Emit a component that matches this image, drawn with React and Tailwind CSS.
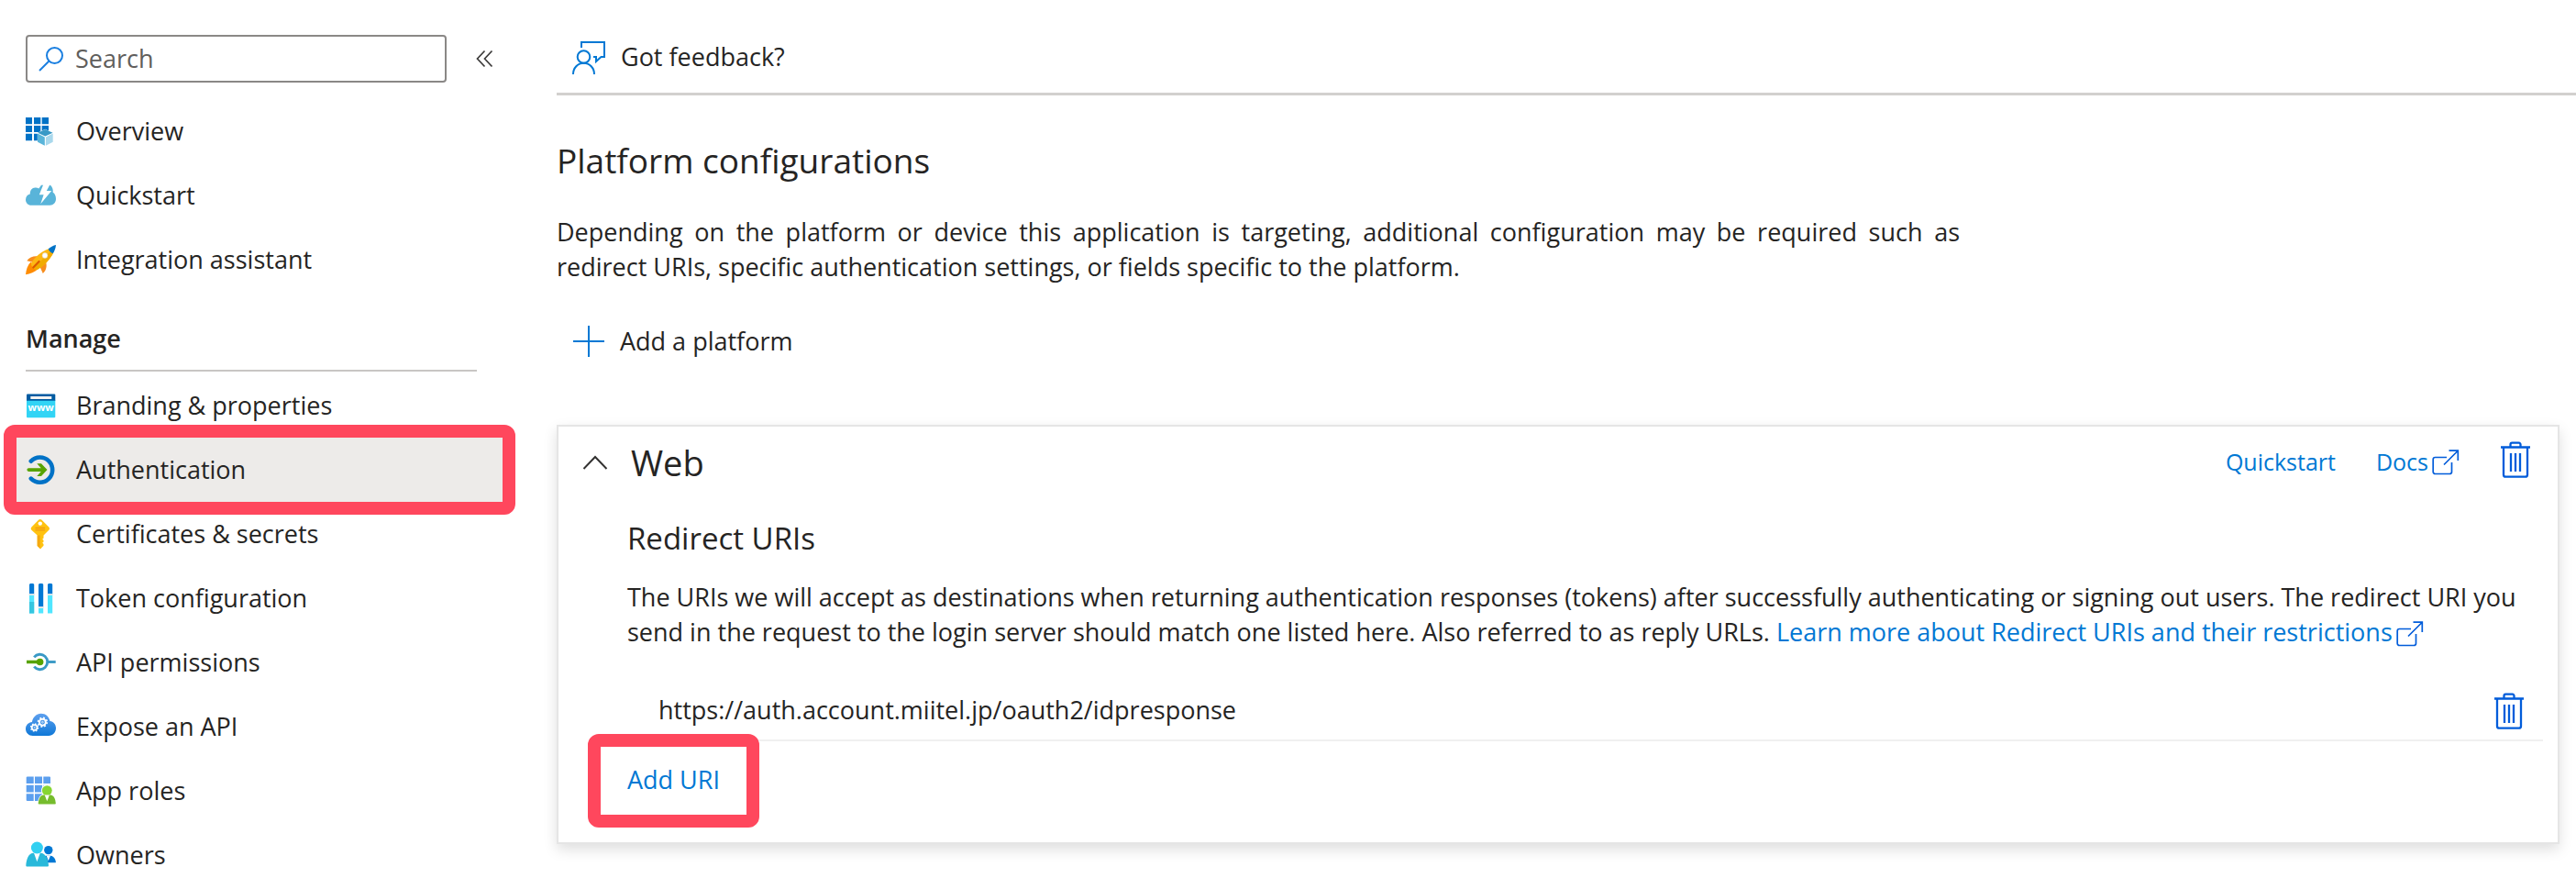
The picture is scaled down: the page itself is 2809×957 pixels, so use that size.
import React from "react";

/* ---------- Sidebar icons ---------- */

const OverviewIcon = () => (
  <svg viewBox="0 0 33 33" className="size-[33px]" aria-hidden="true">
    <g fill="#0072c6">
      <path d="M0 1h7v7.3H0zM9 1h7.3v7.3H9zM17.7 1H25v7.3h-7.3z" />
      <path d="M0 10h7v7H0zM9 10h7.3v7H9zM17.7 10H25v7h-7.3z" />
      <path d="M0 18.7h7v7.6H0zM9 18.7h7.3v7.6H9z" />
    </g>
    <path d="M21.3 13.7l8.5 4v10.2l-8.5 4-8.5-4V17.7z" fill="#fff" />
    <path d="M21.3 14l8.2 3.7-8.2 3.9-8.2-3.9z" fill="#3999c6" />
    <path d="M13 18.6l7.8 3.8v9.3L13 27.7z" fill="#59b4d9" />
    <path d="M29.7 18.6l-7.8 3.8v9.3l7.8-4z" fill="#a9d8ec" />
  </svg>
);

const QuickstartIcon = () => (
  <svg viewBox="0 0 33 33" className="size-[33px]" aria-hidden="true">
    <path
      d="M6 26.7C2.500 26.700 0 24 0 20.700c0-3.200 2-5.500 4.800-6.100C4.600 10.500 7 7.700 10.300 7.500c1.700-.1 3 .3 4 1L17 4.800h9.800c2.200 1.900 3.300 4.700 2.900 7.900 2 1.100 3.300 3.800 3.300 7 0 4-2.800 7-6.500 7z"
      fill="#59b4d9"
    />
    <path d="M19.500 3.500h7.300l-4 7.500h5.400L16.300 25.200l3.300-10h-4.800z" fill="#fff" />
  </svg>
);

const RocketIcon = () => (
  <svg viewBox="0 0 33 33" className="size-[33px]" aria-hidden="true">
    <path d="M13.500 12.500c-4.500-.8-9.500 1-12.200 4.800l6.400 1.500zM22 18.500c1.600 4.500.3 9.500-3.200 12.500l-3-6.500z" fill="#f78d1e" />
    <path d="M5.500 18.500C2 22 .5 27 0 32.300c4.800-.6 9.700-2.500 13.500-6z" fill="#ff8c00" />
    <path d="M25 4.300C17 7.500 9.500 13 5.800 20.500c.5 3.500 3 5.800 6.700 6.500C20 23 26.500 15.500 30 9z" fill="#fdb813" />
    <path d="M30 9c-3.500 6.500-10 14-17.500 18-1.500-.3-2.800-.9-3.900-1.800L27.500 6.500z" fill="#f0ab00" />
    <path d="M33 0c-2.700.6-5.500 2.100-8.300 4.200.6 2.300 2.600 4.200 5.200 5.100C31.600 6.300 32.700 3.200 33 0z" fill="#0072c6" />
    <circle cx="21" cy="11.5" r="2.9" fill="#fff" stroke="#d8d0c0" strokeWidth=".5" />
    <path d="M8.300 24.500l6.300-6.500" stroke="#dd5900" strokeWidth="2.2" strokeLinecap="round" />
  </svg>
);

const BrandingIcon = () => (
  <svg viewBox="0 0 33 33" className="size-[33px]" aria-hidden="true">
    <path d="M1 10h31.300v18.300c0 .5-.4.900-.9.900H1.900c-.5 0-.9-.4-.9-.9z" fill="#32d4f5" />
    <path d="M1.900 3.500h29.500c.5 0 .9.400.9.900v6.300H1V4.400c0-.5.400-.9.900-.9z" fill="#005ba1" />
    <path d="M5.300 6h23v3h-23z" fill="#f2f2f2" />
    <text x="16.6" y="22" textAnchor="middle" fontSize="11" fontWeight="700" fontFamily="Open Sans, sans-serif" fill="#fff">
      www
    </text>
  </svg>
);

const AuthIcon = () => (
  <svg viewBox="0 0 33 33" className="size-[33px]" aria-hidden="true">
    <path d="M5.800 6.700a13.600 13.600 0 1 1 0 18.900" fill="none" stroke="#0072c6" strokeWidth="4.6" strokeLinecap="round" />
    <path d="M12.300 9.300h4.700l6.500 6.800-6.500 6.800h-4.700l4.500-5H3.200a1.800 1.800 0 0 1 0-3.600h13.600z" fill="#57a300" />
  </svg>
);

const KeyIcon = () => (
  <svg viewBox="0 0 33 33" className="size-[33px]" aria-hidden="true">
    <path
      d="M14.300.6c.9-.8 2.200-.8 3 0l8 8c.9.900.9 2.200 0 3.100l-5.800 5.900v3l-1.300 1.200 1.300 1.300v1.300l-1.300 1.300 1.300 1.400v1.700l-3.500 3.600-3.300-3.400V17.600l-6.300-5.900c-.9-.9-.9-2.200 0-3.100z"
      fill="#ffc210"
    />
    <path d="M12.700 17.600h3v14.200l-3-2.800z" fill="#f5a812" />
    <circle cx="15.8" cy="4.6" r="2.2" fill="#fff" />
    <path d="M10.500 9.500h10.600M10.500 11.800h10.600" stroke="#f09a12" strokeWidth="1.3" />
  </svg>
);

const TokenIcon = () => (
  <svg viewBox="0 0 33 33" className="size-[33px]" aria-hidden="true">
    <path d="M4 12.500h5.200v20H4zM24 12.500h5.200v20H24zM14 27h5.200v5.500H14z" fill="#50e6ff" />
    <path d="M4 20h5.200v12.500H4z" fill="#35c6e0" />
    <path d="M5 0h3.200l1 1v10.500H4V1zM15 0h3.200l1 1v24.500H14V1zM25 0h3.200l1 1v10.500H24V1z" fill="#0078d4" />
    <path d="M3.500 11.200h6.200v1.600H3.500zM13.500 25.200h6.200v1.600h-6.200zM23.500 11.200h6.200v1.600h-6.200z" fill="#e6e6e6" />
  </svg>
);

const ApiPermissionsIcon = () => (
  <svg viewBox="0 0 33 33" className="size-[33px]" aria-hidden="true">
    <path d="M9.200 10.300a8.200 8.200 0 1 1 0 10.400" fill="none" stroke="#3999c6" strokeWidth="2.9" />
    <path d="M24 15.500h8.700" stroke="#3999c6" strokeWidth="2.9" />
    <path d="M1 15.500h14" stroke="#57a300" strokeWidth="3.5" />
    <circle cx="15.6" cy="15.5" r="3.8" fill="#57a300" />
  </svg>
);

const Gear = ({ cx, cy, r }) => (
  <g transform={`translate(${cx} ${cy})`} fill="none" stroke="#fff">
    <circle r={r * 0.62} strokeWidth={r * 0.36} />
    <circle r={r * 0.87} strokeWidth={r * 0.3} strokeDasharray={`${r * 0.342} ${r * 0.342}`} />
    <circle r={r * 0.16} strokeWidth={r * 0.14} />
  </g>
);

const ExposeIcon = () => (
  <svg viewBox="0 0 33 33" className="size-[33px]" aria-hidden="true">
    <defs>
      <linearGradient id="cloud" x1="0" y1="0" x2="0" y2="1">
        <stop offset="0" stopColor="#5ea0ef" />
        <stop offset="1" stopColor="#0f78d7" />
      </linearGradient>
    </defs>
    <path
      d="M7.800 26C3.400 26 0 22.700 0 18.500c0-4 3-7 6.900-7.400C7.800 5.700 11.800 1.800 16.700 1.800c5.200 0 8.800 3.500 9.800 8.200 3.700.4 6.500 3.600 6.500 7.600 0 4.800-3.400 8.400-8 8.400z"
      fill="url(#cloud)"
    />
    <Gear cx={18.4} cy={11.2} r={5.6} />
    <Gear cx={9.6} cy={17} r={4.6} />
  </svg>
);

const AppRolesIcon = () => (
  <svg viewBox="0 0 33 33" className="size-[33px]" aria-hidden="true">
    <g fill="#5c9fee">
      <path d="M1.500.5h7.200V8H.7V1.300zM10 .5h8V8h-8zM19.300.5h7l.7.800V8h-7.700z" />
      <path d="M.7 9.800h8v7.700h-8zM10 9.800h8v7.700h-8zM19.300 9.800H27v7.700h-7.700z" />
      <path d="M.7 19.200h8V27H1.500l-.8-.8zM10 19.200h8V27h-8z" />
    </g>
    <circle cx="23.3" cy="15.5" r="6.4" fill="#fff" />
    <path d="M12.700 31.500c.4-6 2.300-11.600 6.600-12h8c4 .4 5.700 6 6 12z" fill="#fff" />
    <circle cx="23.3" cy="15.6" r="5.4" fill="#86d633" />
    <path d="M13.700 29.500c.6-4.300 1.800-8.700 5.700-9h7.700c3.900.3 5.200 4.700 5.700 9 0 .7-.4 1.100-1.100 1.100H14.800c-.7 0-1.100-.4-1.100-1.100z" fill="#76bc2d" />
    <path d="M20.700 20.500h5.200l-2.600 6.700z" fill="#fff" />
  </svg>
);

const OwnersIcon = () => (
  <svg viewBox="0 0 33 33" className="size-[33px]" aria-hidden="true">
    <path d="M18 24.300c.3-3.600 1.500-7.200 4.600-7.500h4.600c3.400.3 5.200 3.400 5.700 6.600.1.500-.3.900-.9.900z" fill="#0078d4" />
    <path d="M22.700 16.800h4.200l-2.100 5.400z" fill="#fff" />
    <circle cx="24.8" cy="10.6" r="4.7" fill="#0078d4" />
    <path d="M.3 27.200c.6-6.300 2.600-13 7.600-13.400h9c5 .4 7.500 7.100 8.100 13.400 0 .8-.5 1.300-1.300 1.300H1.600c-.8 0-1.300-.5-1.300-1.300z" fill="#29b9da" />
    <path d="M9 13.800h6.800l-3.400 9.400z" fill="#fff" />
    <circle cx="12.4" cy="8" r="6.5" fill="#32d0f1" />
  </svg>
);

/* ---------- Line icons ---------- */

const SearchIcon = () => (
  <svg viewBox="0 0 28 28" className="size-7 shrink-0" fill="none" stroke="#1a7fe0" strokeWidth="2" aria-hidden="true">
    <circle cx="17.5" cy="10.5" r="8.5" />
    <path d="M11.500 16.500L1 27" />
  </svg>
);

const FeedbackIcon = () => (
  <svg viewBox="0 0 36 38" className="h-[38px] w-9 shrink-0" fill="none" stroke="#0078d4" strokeWidth="2" aria-hidden="true">
    <path d="M10 8V2h25v16h-3.500l-5.500 5v-5h-3" />
    <circle cx="12.5" cy="18" r="6.8" />
    <path d="M1 37c0-7 5-12.200 11.500-12.200S24 30 24 37" />
  </svg>
);

const ExternalIcon = ({ className }) => (
  <svg viewBox="0 0 30 28" className={className} fill="none" stroke="#015cda" strokeWidth="1.7" aria-hidden="true">
    <path d="M16 8.500H3.500a2.300 2.300 0 0 0-2.300 2.300v13.400a2.300 2.300 0 0 0 2.300 2.300h15.700a2.300 2.300 0 0 0 2.300-2.300V14" />
    <path d="M13 16.500L28 1.500M18.500 1.200h9.800V12" />
  </svg>
);

const TrashIcon = () => (
  <svg viewBox="0 0 34 40" className="h-10 w-[34px]" fill="none" stroke="#015cda" strokeWidth="2.3" aria-hidden="true">
    <path d="M1 6.500h32M11.500 6V3.500a1.800 1.800 0 0 1 1.800-1.800h7.400a1.800 1.800 0 0 1 1.800 1.800V6" />
    <path d="M4 7v29.500a2.200 2.200 0 0 0 2.200 2.200h21.600a2.200 2.200 0 0 0 2.200-2.200V7" />
    <path d="M12 13v20M17 13v20M22 13v20" />
  </svg>
);

/* ---------- Data ---------- */

const topItems = [
  { label: "Overview", Icon: OverviewIcon },
  { label: "Quickstart", Icon: QuickstartIcon },
  { label: "Integration assistant", Icon: RocketIcon },
];

const manageItems = [
  { label: "Branding & properties", Icon: BrandingIcon },
  { label: "Authentication", Icon: AuthIcon, active: true },
  { label: "Certificates & secrets", Icon: KeyIcon },
  { label: "Token configuration", Icon: TokenIcon },
  { label: "API permissions", Icon: ApiPermissionsIcon },
  { label: "Expose an API", Icon: ExposeIcon },
  { label: "App roles", Icon: AppRolesIcon },
  { label: "Owners", Icon: OwnersIcon },
];

function Highlight() {
  return <span className="pointer-events-none absolute -inset-3.5 rounded-xl border-14 border-[#ff475d]" />;
}

function NavList({ items }) {
  return (
    <ul>
      {items.map(({ label, Icon, active }) => (
        <li key={label}>
          <a
            href="#"
            aria-current={active ? "page" : undefined}
            className={`relative flex h-[70px] items-center gap-[22px] pl-2.5 ${active ? "bg-[#edebe9]" : ""}`}
          >
            <Icon />
            <span>{label}</span>
            {active && <Highlight />}
          </a>
        </li>
      ))}
    </ul>
  );
}

function Sidebar() {
  return (
    <nav className="w-[548px] shrink-0 pt-[38px] pl-[18px]">
      <div className="mb-[18px] flex items-center pl-2.5">
        <label className="flex h-[52px] w-[459px] items-center gap-3 rounded-sm border-2 border-[#8a8886] pl-3">
          <SearchIcon />
          <input
            type="text"
            aria-label="Search"
            placeholder="Search"
            className="w-full min-w-0 bg-transparent outline-none placeholder:text-[#605e5c]"
          />
        </label>
        <button type="button" aria-label="Collapse menu" className="ml-8">
          <svg viewBox="0 0 20 20" className="size-5" fill="none" stroke="#3b3a39" strokeWidth="1.7">
            <path d="M9.500 1.500L1.500 10l8 8.500M17.500 1.500L9.500 10l8 8.500" />
          </svg>
        </button>
      </div>

      <NavList items={topItems} />

      <h2 className="mr-7 mb-0.5 ml-2.5 border-b-2 border-[#c8c6c4] pt-8 pb-[15px] leading-[38px] font-semibold">
        Manage
      </h2>

      <NavList items={manageItems} />
    </nav>
  );
}

function WebCard() {
  return (
    <section className="mr-[18px] border-2 border-[#e5e5e5] bg-white pb-[30px] shadow-[0_6px_14px_rgba(0,0,0,0.13)]">
      <div className="flex items-center pt-[13px] pr-[29px] pl-[26px]">
        <button type="button" className="flex items-center gap-[25px]">
          <svg viewBox="0 0 28 16" className="h-4 w-7" fill="none" stroke="#323130" strokeWidth="2">
            <path d="M1.500 15L14 2l12.500 13" />
          </svg>
          <h2 className="text-[38px] leading-[52px]">Web</h2>
        </button>
        <div className="ml-auto flex items-center text-[25px] text-[#0078d4]">
          <a href="#">Quickstart</a>
          <a href="#" className="ml-11 flex items-center gap-1">
            Docs
            <ExternalIcon className="h-7 w-[30px]" />
          </a>
          <button type="button" aria-label="Delete platform" className="-mt-1.5 ml-11">
            <TrashIcon />
          </button>
        </div>
      </div>

      <div className="pt-[34px] pr-4 pl-[75px]">
        <h3 className="text-[33px] leading-[46px]">Redirect URIs</h3>
        <p className="mt-[22px] leading-[38px]">
          The URIs we will accept as destinations when returning authentication responses (tokens) after
          successfully authenticating or signing out users. The redirect URI you
          <br />
          send in the request to the login server should match one listed here. Also referred to as reply URLs.{" "}
          <a href="#" className="text-[#0078d4]">
            Learn more about Redirect URIs and their restrictions
            <ExternalIcon className="ml-1 inline h-7 w-[30px] align-[-6px]" />
          </a>
        </p>

        <div className="mt-9 flex h-16 items-center justify-between border-b-2 border-[#f0f0f0] pr-5 pl-[34px]">
          <span>https://auth.account.miitel.jp/oauth2/idpresponse</span>
          <button type="button" aria-label="Delete URI">
            <TrashIcon />
          </button>
        </div>

        <button type="button" className="relative mt-1.5 -ml-[29px] h-[74px] px-[29px] text-[#0078d4]">
          Add URI
          <Highlight />
        </button>
      </div>
    </section>
  );
}

export default function App() {
  return (
    <div className="flex min-h-screen bg-white font-['Open_Sans',sans-serif] text-[27px] text-[#252423]">
      <Sidebar />

      <main className="min-w-0 flex-1 pl-[59px]">
        <div className="flex h-[104px] items-center border-b-3 border-[#d2d0ce] pl-[17px]">
          <button type="button" className="mt-6 flex items-center gap-[17px]">
            <FeedbackIcon />
            Got feedback?
          </button>
        </div>

        <h1 className="mt-[45px] text-[37px] leading-[52px]">Platform configurations</h1>
        <p className="mt-[33px] max-w-[1530px] text-justify leading-[38px]">
          Depending on the platform or device this application is targeting, additional configuration may be
          required such as redirect URIs, specific authentication settings, or fields specific to the platform.
        </p>

        <button type="button" className="mt-[42px] mb-[70px] ml-[18px] flex items-center gap-[17px]">
          <svg viewBox="0 0 34 34" className="size-[34px]" stroke="#0078d4" strokeWidth="2">
            <path d="M17 0v34M0 17h34" />
          </svg>
          Add a platform
        </button>

        <WebCard />
      </main>
    </div>
  );
}
